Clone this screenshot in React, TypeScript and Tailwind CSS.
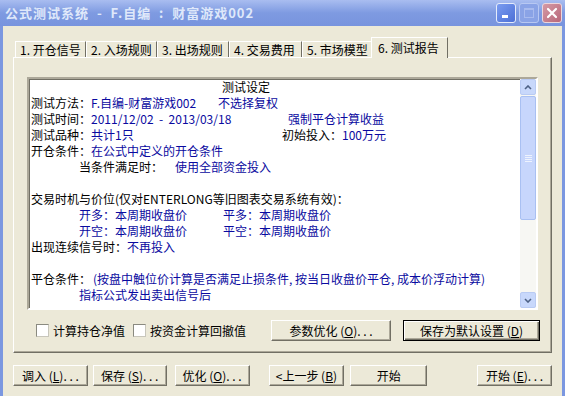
import React from "react";

const FONT = "font-['Noto_Sans_CJK_SC','Noto_Sans_CJK_JP',sans-serif]";

// classic raised 3D button border
const raised =
  "border border-t-white border-l-white border-r-[#716f64] border-b-[#716f64] shadow-[inset_-1px_-1px_0_#aca899]";

const tabs = ["1.开仓信号", "2.入场规则", "3.出场规则", "4.交易费用", "5.市场模型"];
const tabWidths = ["w-[71px]", "w-[71px]", "w-[72px]", "w-[73px]", "w-[71px]"];

function Blue({ children, className = "" }: { children: React.ReactNode; className?: string }) {
  return <span className={`text-[#0a0aa0] ${className}`}>{children}</span>;
}

function Black({ children, className = "" }: { children: React.ReactNode; className?: string }) {
  return <span className={`text-black ${className}`}>{children}</span>;
}

function Row({ children, className = "" }: { children?: React.ReactNode; className?: string }) {
  return <div className={`flex h-[16px] items-center whitespace-pre ${className}`}>{children}</div>;
}

function Button({
  children,
  className = "",
  focused = false,
}: {
  children: React.ReactNode;
  className?: string;
  focused?: boolean;
}) {
  const border = focused
    ? "border border-black shadow-[inset_1px_1px_0_#fff,inset_-1px_-1px_0_#716f64,inset_-2px_-2px_0_#aca899]"
    : raised;
  return (
    <div
      className={`flex h-[21px] items-center justify-center whitespace-pre bg-[#ece9d8] text-[12px] text-black ${border} ${className}`}
    >
      {children}
    </div>
  );
}

function Checkbox({ label, className = "" }: { label: string; className?: string }) {
  return (
    <div className={`flex items-center gap-[4px] ${className}`}>
      <div className="h-[13px] w-[13px] border border-t-[#8a8a80] border-l-[#8a8a80] border-r-[#c8c6bb] border-b-[#c8c6bb] bg-white" />
      <span className="text-[12px] text-black">{label}</span>
    </div>
  );
}

function ScrollBar() {
  return (
    <div className="flex w-[16px] flex-col bg-[#f7f7f3]">
      <div className="flex h-[16px] items-center justify-center rounded-[2px] border border-[#b9cbf3] bg-[#c8d8fb]">
        <svg width="8" height="5" viewBox="0 0 8 5">
          <path d="M1 4 L4 1 L7 4" stroke="#4d6185" strokeWidth="1.6" fill="none" />
        </svg>
      </div>
      <div className="mt-[1px] flex h-[124px] items-center justify-center rounded-[2px] border border-[#a9c0f2] bg-[#c7d6fc]">
        <div className="flex flex-col gap-[1px]">
          <div className="h-[1px] w-[7px] bg-[#eef3fe]" />
          <div className="h-[1px] w-[7px] bg-[#eef3fe]" />
          <div className="h-[1px] w-[7px] bg-[#eef3fe]" />
          <div className="h-[1px] w-[7px] bg-[#eef3fe]" />
        </div>
      </div>
      <div className="flex-1" />
      <div className="flex h-[16px] items-center justify-center rounded-[2px] border border-[#b9cbf3] bg-[#c8d8fb]">
        <svg width="8" height="5" viewBox="0 0 8 5">
          <path d="M1 1 L4 4 L7 1" stroke="#4d6185" strokeWidth="1.6" fill="none" />
        </svg>
      </div>
    </div>
  );
}

function Report() {
  return (
    <div className="flex h-[233px] w-[511px] border-2 border-t-[#aca899] border-l-[#aca899] border-r-white border-b-white bg-white shadow-[inset_1px_1px_0_#716f64]">
      <div className="flex-1 overflow-hidden pl-[2px] text-[12px]">
        <Row className="pl-[191px]">
          <Black>测试设定</Black>
        </Row>
        <Row>
          <Black className="w-[60px]">测试方法：</Black>
          <Blue className="w-[127px]">F.自编-财富游戏002</Blue>
          <Blue>不选择复权</Blue>
        </Row>
        <Row>
          <Black className="w-[60px]">测试时间：</Black>
          <Blue className="w-[197px]">2011/12/02  -  2013/03/18</Blue>
          <Blue>强制平仓计算收益</Blue>
        </Row>
        <Row>
          <Black className="w-[60px]">测试品种：</Black>
          <Blue className="w-[191px]">共计1只</Blue>
          <Black className="w-[60px]">初始投入：</Black>
          <Blue>100万元</Blue>
        </Row>
        <Row>
          <Black className="w-[60px]">开仓条件：</Black>
          <Blue>在公式中定义的开仓条件</Blue>
        </Row>
        <Row className="pl-[48px]">
          <Black className="w-[96px]">当条件满足时：</Black>
          <Blue>使用全部资金投入</Blue>
        </Row>
        <Row />
        <Row>
          <Black>交易时机与价位(仅对ENTERLONG等旧图表交易系统有效)：</Black>
        </Row>
        <Row className="pl-[48px]">
          <Blue className="w-[144px]">开多：本周期收盘价</Blue>
          <Blue>平多：本周期收盘价</Blue>
        </Row>
        <Row className="pl-[48px]">
          <Blue className="w-[144px]">开空：本周期收盘价</Blue>
          <Blue>平空：本周期收盘价</Blue>
        </Row>
        <Row>
          <Black className="w-[96px]">出现连续信号时：</Black>
          <Blue>不再投入</Blue>
        </Row>
        <Row />
        <Row>
          <Black className="w-[62px]">平仓条件：</Black>
          <Blue>(按盘中触位价计算是否满足止损条件, 按当日收盘价平仓, 成本价浮动计算)</Blue>
        </Row>
        <Row className="pl-[48px]">
          <Blue>指标公式发出卖出信号后</Blue>
        </Row>
      </div>
      <ScrollBar />
    </div>
  );
}

export default function App() {
  return (
    <div className={`flex h-[396px] w-[565px] flex-col overflow-hidden bg-[#ece9d8] ${FONT}`}>
      {/* title bar */}
      <div className="flex h-[26px] items-center bg-gradient-to-b from-[#a9bdf0] via-[#7e9ae1] to-[#7894de] pl-[5px] pr-[3px]">
        <span className="flex-1 whitespace-pre text-[13px] font-bold tracking-[1px] text-[#dfe8fa]">
          公式测试系统  -  F.自编  :  财富游戏002
        </span>
        <div className="flex items-center gap-[3px]">
          <div className="flex h-[20px] w-[20px] items-end rounded-[3px] border border-[#e4ebfb] bg-gradient-to-br from-[#7b9cf0] to-[#4c6fd6] pb-[4px] pl-[5px]">
            <div className="h-[3px] w-[6px] bg-white" />
          </div>
          <div className="flex h-[20px] w-[20px] items-center justify-center rounded-[3px] border border-[#b8c8f2] bg-[#8aa3e6]">
            <div className="h-[10px] w-[10px] border border-t-2 border-[#a9bbee]" />
          </div>
          <div className="flex h-[20px] w-[20px] items-center justify-center rounded-[3px] border border-[#ecd6dc] bg-gradient-to-br from-[#d49aa6] to-[#b8677a]">
            <svg width="12" height="12" viewBox="0 0 12 12">
              <path d="M2 2 L10 10 M10 2 L2 10" stroke="white" strokeWidth="2.2" strokeLinecap="round" />
            </svg>
          </div>
        </div>
      </div>

      {/* body */}
      <div className="flex flex-1 flex-col border-x-[3px] border-[#7b97e0] px-[10px]">
        {/* tabs */}
        <div className="mt-[11px] flex h-[20px] items-end pl-[2px] text-[12px] text-black">
          {tabs.map((t, i) => (
            <div
              key={t}
              className={`flex h-[16px] items-center whitespace-pre border-l border-t border-r border-l-white border-t-white border-r-[#716f64] pl-[4px] ${tabWidths[i]}`}
            >
              {t.replace(".", ". ")}
            </div>
          ))}
          <div className="relative top-[1px] z-10 -ml-[2px] flex h-[21px] w-[77px] items-center whitespace-pre border-l border-t border-r border-l-white border-t-white border-r-[#716f64] bg-[#ece9d8] pl-[6px]">
            6. 测试报告
          </div>
        </div>

        {/* tab panel */}
        <div className="flex h-[296px] flex-col border border-t-white border-l-white border-r-[#716f64] border-b-[#716f64] pl-[13px] pt-[19px] shadow-[inset_-1px_-1px_0_#aca899]">
          <Report />
          <div className="mt-[10px] flex items-center">
            <Checkbox label="计算持仓净值" className="ml-[9px]" />
            <Checkbox label="按资金计算回撤值" className="ml-[8px]" />
            <Button className="ml-[25px] w-[120px]">
              参数优化 (<u>O</u>). . .
            </Button>
            <Button focused className="ml-[12px] w-[137px]">
              保存为默认设置 (<u>D</u>)
            </Button>
          </div>
        </div>

        {/* bottom buttons */}
        <div className="mt-[12px] flex items-center">
          <Button className="w-[75px]">
            调入 (<u>L</u>). . .
          </Button>
          <Button className="ml-[5px] w-[74px]">
            保存 (<u>S</u>). . .
          </Button>
          <Button className="ml-[8px] w-[75px]">
            优化 (<u>O</u>). . .
          </Button>
          <Button className="ml-[19px] w-[76px]">
            &lt;上一步 (<u>B</u>)
          </Button>
          <Button className="ml-[6px] w-[77px]">开始</Button>
          <Button className="ml-[50px] w-[75px]">
            开始 (<u>E</u>). . .
          </Button>
        </div>
      </div>
    </div>
  );
}
